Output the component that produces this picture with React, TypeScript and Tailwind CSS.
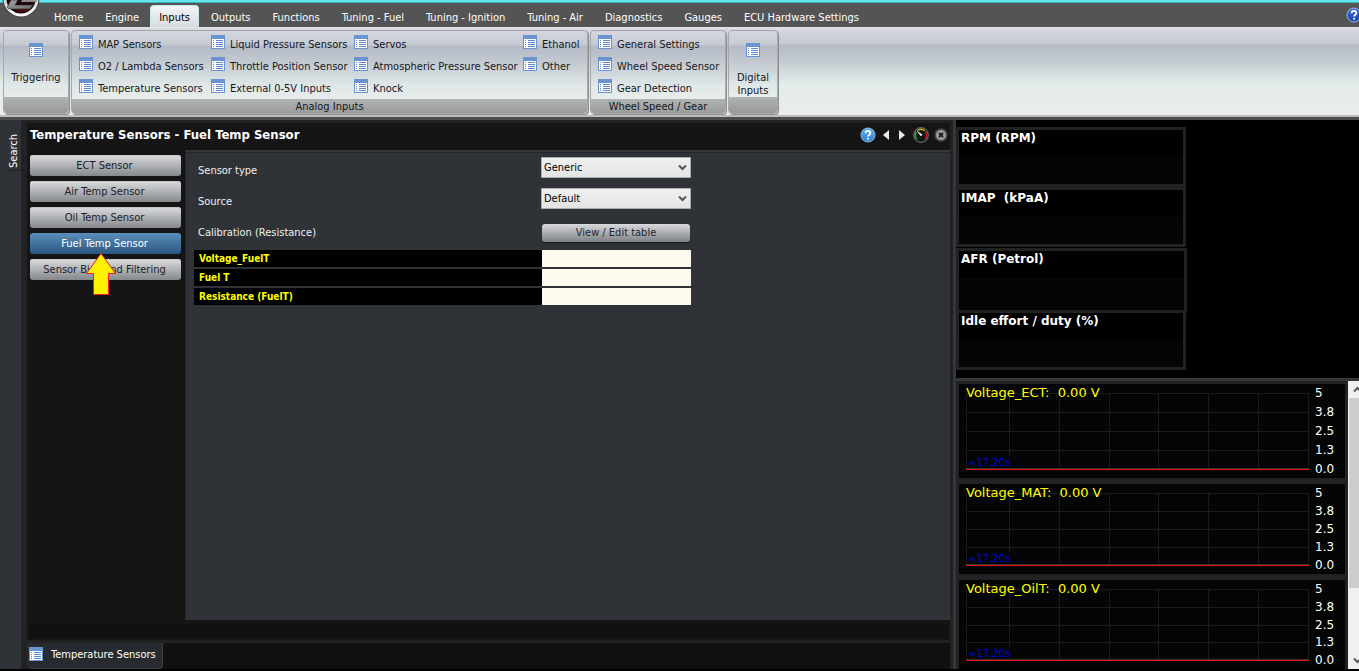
import React from "react";

const tabs = [
  "Home",
  "Engine",
  "Inputs",
  "Outputs",
  "Functions",
  "Tuning - Fuel",
  "Tuning - Ignition",
  "Tuning - Air",
  "Diagnostics",
  "Gauges",
  "ECU Hardware Settings",
];

const analogColumns: { items: string[]; width: string }[] = [
  { items: ["MAP Sensors", "O2 / Lambda Sensors", "Temperature Sensors"], width: "w-[132px]" },
  { items: ["Liquid Pressure Sensors", "Throttle Position Sensor", "External 0-5V Inputs"], width: "w-[143px]" },
  { items: ["Servos", "Atmospheric Pressure Sensor", "Knock"], width: "w-[169px]" },
  { items: ["Ethanol", "Other"], width: "w-[64px]" },
];

const wheelItems = ["General Settings", "Wheel Speed Sensor", "Gear Detection"];

const pages = [
  "ECT Sensor",
  "Air Temp Sensor",
  "Oil Temp Sensor",
  "Fuel Temp Sensor",
  "Sensor Bias and Filtering",
];

const readings = ["Voltage_FuelT", "Fuel T", "Resistance (FuelT)"];

const charts = [
  { title: "Voltage_ECT:  0.00 V", height: 76, box: "h-[85px]" },
  { title: "Voltage_MAT:  0.00 V", height: 72, box: "h-[81px]" },
  { title: "Voltage_OilT:  0.00 V", height: 71, box: "h-[81px]" },
];

const scale = ["5", "3.8", "2.5", "1.3", "0.0"];

function ListIcon() {
  return (
    <svg width="14" height="14" viewBox="0 0 14 14" shapeRendering="crispEdges" className="shrink-0" aria-hidden="true">
      <rect width="14" height="14" rx="1" fill="#6a94cf" />
      <rect x="1" y="4" width="12" height="9" fill="#fff" />
      {[5, 7, 9, 11].map((y) => (
        <g key={y} fill="#5f8ac8">
          <rect x="2" y={y} width="1" height="1" />
          <rect x="5" y={y} width="7" height="1" />
        </g>
      ))}
    </svg>
  );
}

function Logo() {
  return (
    <svg width="40" height="18" viewBox="0 0 40 18" className="absolute left-0 top-0" aria-hidden="true">
      <defs>
        <linearGradient id="ring" x1="0" y1="0" x2="0" y2="1">
          <stop offset="0" stopColor="#9b9b9b" />
          <stop offset="1" stopColor="#ffffff" />
        </linearGradient>
        <linearGradient id="mark" x1="0" y1="0" x2="1" y2="1">
          <stop offset="0" stopColor="#a5a5a5" />
          <stop offset="1" stopColor="#6c6c6c" />
        </linearGradient>
      </defs>
      <circle cx="21" cy="-1" r="18.5" fill="#3d3d3d" />
      <circle cx="21" cy="-1" r="17.5" fill="url(#ring)" />
      <circle cx="21" cy="-1" r="14.5" fill="#1c0608" />
      <path d="M13 9 Q20 15 30 9 Z" fill="#4a0a10" />
      <path d="M11 0 H18 L15 5 H33 L30 9 H9 L7 7.5 Z" fill="url(#mark)" stroke="#262626" strokeWidth="0.6" />
      <path d="M22 0 H37 L36 2 H21 Z" fill="#8d8d8d" />
    </svg>
  );
}

function HelpIcon({ id, light, dark }: { id: string; light: string; dark: string }) {
  return (
    <svg width="16" height="16" viewBox="0 0 16 16" aria-hidden="true">
      <defs>
        <linearGradient id={id} x1="0" y1="0" x2="0" y2="1">
          <stop offset="0" stopColor={light} />
          <stop offset="1" stopColor={dark} />
        </linearGradient>
      </defs>
      <circle cx="8" cy="8" r="7" fill={`url(#${id})`} stroke="#8dbdea" strokeWidth="1" />
      <path d="M5.6 6.2 C5.6 3.2 10.5 3.3 10.4 6 C10.4 7.7 8.1 7.8 8.1 9.6" fill="none" stroke="#fff" strokeWidth="1.7" />
      <rect x="7.2" y="10.8" width="1.8" height="1.8" fill="#fff" />
    </svg>
  );
}

function GaugeIcon() {
  return (
    <svg width="16" height="16" viewBox="0 0 16 16" aria-hidden="true">
      <circle cx="8" cy="8" r="7.3" fill="#151515" stroke="#666" strokeWidth="1.3" />
      <path d="M4 12 A5.6 5.6 0 0 1 3.4 4.8" fill="none" stroke="#18b035" strokeWidth="1.5" />
      <path d="M4.4 3.7 A5.6 5.6 0 0 1 11.6 3.7" fill="none" stroke="#c9b813" strokeWidth="1.5" />
      <path d="M12.4 4.6 A5.6 5.6 0 0 1 12 12" fill="none" stroke="#d01818" strokeWidth="1.5" />
      <path d="M4.5 4.5 L9 7.5 L8 9 Z" fill="#fff" stroke="#fff" strokeWidth="0.5" />
    </svg>
  );
}

function CloseIcon() {
  return (
    <svg width="16" height="16" viewBox="0 0 16 16" aria-hidden="true">
      <circle cx="8" cy="8" r="7" fill="#3a3a3a" />
      <circle cx="8" cy="8" r="5.2" fill="#9a9a9a" />
      <path d="M6 6 L10 10 M10 6 L6 10" stroke="#1c1c1c" strokeWidth="1.8" />
    </svg>
  );
}

function Chevron({ up = false }: { up?: boolean }) {
  return (
    <svg width="9" height="7" viewBox="0 0 9 7" aria-hidden="true">
      <path d={up ? "M1 5.5 L4.5 2 L8 5.5" : "M1 1.5 L4.5 5 L8 1.5"} fill="none" stroke="#555" strokeWidth="2" />
    </svg>
  );
}

const groupClass =
  "flex flex-col overflow-hidden rounded-[4px] border border-[#a5a8ad] bg-[linear-gradient(to_bottom,#d3d7de_0,#c5cad3_14px,#b3bac5_15px,#c3cad1_32px,#e0e8e8_55px,#e8ecec_68px)] shadow-[1px_1px_0_#909090]";

function GroupFooter({ children }: { children?: React.ReactNode }) {
  return (
    <div className="h-4 shrink-0 bg-gradient-to-b from-[#b0b3b2] to-[#989a99] text-center leading-4">{children}</div>
  );
}

function RibbonItem({ label }: { label: string }) {
  return (
    <button type="button" className="flex h-[22px] items-center gap-[5px] whitespace-nowrap">
      <span className="pb-1">
        <ListIcon />
      </span>
      <span className="pt-[2px]">{label}</span>
    </button>
  );
}

function Ribbon() {
  return (
    <div className="flex h-[90px] shrink-0 gap-[2px] border-b-2 border-[#bcbcbc] bg-[linear-gradient(to_bottom,#e4e5e8_0,#d5d7de_3px,#c5c8d2_17px,#b3bac5_18px,#c3cad1_34px,#e2ecea_56px,#ebecec_86px)] pt-[3px] pb-px pl-[3px]">
      <section className={groupClass + " w-[66px]"}>
        <button type="button" className="flex flex-1 flex-col items-center pt-3">
          <ListIcon />
          <span className="mt-[14px] leading-[13px]">Triggering</span>
        </button>
        <GroupFooter />
      </section>
      <section className={groupClass}>
        <div className="flex flex-1 pt-[2px] pl-[7px]">
          {analogColumns.map((c) => (
            <div key={c.items[0]} className={c.width}>
              {c.items.map((i) => (
                <RibbonItem key={i} label={i} />
              ))}
            </div>
          ))}
        </div>
        <GroupFooter>Analog Inputs</GroupFooter>
      </section>
      <section className={groupClass + " w-[136px]"}>
        <div className="flex-1 pt-[2px] pl-[7px]">
          {wheelItems.map((i) => (
            <RibbonItem key={i} label={i} />
          ))}
        </div>
        <GroupFooter>Wheel Speed / Gear</GroupFooter>
      </section>
      <section className={groupClass + " w-[50px]"}>
        <button type="button" className="flex flex-1 flex-col items-center pt-3">
          <ListIcon />
          <span className="mt-[14px] leading-[13px]">
            Digital
            <br />
            Inputs
          </span>
        </button>
        <GroupFooter />
      </section>
    </div>
  );
}

function SelectField({ id, label, value }: { id: string; label: string; value: string }) {
  return (
    <div className="flex h-[31px] items-center">
      <label htmlFor={id} className="w-[343px] pt-2">
        {label}
      </label>
      <div className="relative w-[150px]">
        <select
          id={id}
          defaultValue={value}
          className="block h-[21px] w-full appearance-none border border-[#acacac] bg-gradient-to-b from-[#f0f0f0] to-[#e4e4e4] pt-[2px] pl-[2px] text-black outline-none"
        >
          <option>{value}</option>
        </select>
        <span className="pointer-events-none absolute right-1 top-[7px]">
          <Chevron />
        </span>
      </div>
    </div>
  );
}

function EditorPanel() {
  return (
    <main className="flex min-w-0 flex-1 flex-col border-t-3 border-l-3 border-[#222] bg-[#101010]">
      <div className="flex min-h-0 flex-1 flex-col bg-[#151515]">
        <header className="flex h-[27px] shrink-0 items-center justify-between pb-[3px] pl-[3px]">
          <h1 className="text-[13px] font-bold text-white">Temperature Sensors - Fuel Temp Sensor</h1>
          <div className="flex items-center pr-px">
            <button type="button" aria-label="Help">
              <HelpIcon id="help-panel" light="#5fb0f0" dark="#2f7ed2" />
            </button>
            <button type="button" aria-label="Previous" className="ml-[7px]">
              <svg width="6" height="10" viewBox="0 0 6 10"><path d="M6 0 V10 L0 5 Z" fill="#e8e8e8" /></svg>
            </button>
            <button type="button" aria-label="Next" className="ml-[10px]">
              <svg width="6" height="10" viewBox="0 0 6 10"><path d="M0 0 V10 L6 5 Z" fill="#e8e8e8" /></svg>
            </button>
            <button type="button" aria-label="Gauges" className="ml-2">
              <GaugeIcon />
            </button>
            <button type="button" aria-label="Close" className="ml-1">
              <CloseIcon />
            </button>
          </div>
        </header>
        <div className="flex min-h-0 flex-1">
          <nav className="flex w-[158px] shrink-0 flex-col gap-[5px] pt-[5px] pr-1 pl-[3px]">
            {pages.map((p) =>
              p === "Fuel Temp Sensor" ? (
                <div key={p} className="relative">
                  <button
                    type="button"
                    className="block h-[21px] w-full rounded-[3px] bg-gradient-to-b from-[#5a8fbd] to-[#2c587f] pt-[2px] pr-[2px] text-white"
                  >
                    {p}
                  </button>
                  <svg
                    width="32"
                    height="44"
                    viewBox="0 0 32 44"
                    className="pointer-events-none absolute left-[55px] top-[19px] z-10"
                    aria-hidden="true"
                  >
                    <path d="M16 1.5 L30.5 21.5 H23.5 V42.5 H8.5 V21.5 H1.5 Z" fill="#fff200" stroke="#ed1c24" />
                  </svg>
                </div>
              ) : (
                <button
                  key={p}
                  type="button"
                  className="h-[21px] rounded-[3px] bg-gradient-to-b from-[#dcdddf] to-[#85888c] pt-[2px] pr-[2px] text-[#1c2026] shadow-[inset_0_1px_0_#c4c6c8]"
                >
                  {p}
                </button>
              ),
            )}
          </nav>
          <section className="min-w-0 flex-1 border-t-2 border-l border-[#33373c] border-l-[#22262b] bg-[#2f3338] text-[#f0f0f0] shadow-[inset_0_1px_0_#22262b]">
            <div className="pl-3">
              <SelectField id="sensor-type" label="Sensor type" value="Generic" />
              <SelectField id="source" label="Source" value="Default" />
              <div className="mt-[3px] flex h-[31px] items-center">
                <span className="w-[344px] pt-[2px]">Calibration (Resistance)</span>
                <button
                  type="button"
                  className="h-[18px] w-[148px] rounded-[3px] bg-gradient-to-b from-[#d8d9dc] to-[#7e8286] pt-px text-[#23272d] shadow-[0_1px_1px_#17191c]"
                >
                  View / Edit table
                </button>
              </div>
            </div>
            <table className="ml-2 w-[497px] table-fixed border-separate [border-spacing:0_2px]">
              <tbody>
                {readings.map((r) => (
                  <tr key={r}>
                    <th scope="row" className="h-[17px] w-[348px] bg-black py-0 pl-[5px] text-left font-['DejaVu_Sans_Condensed',Tahoma,sans-serif] text-[10px] leading-[17px] font-bold text-[#ff0]">
                      {r}
                    </th>
                    <td className="bg-[#fffaf0] p-0" />
                  </tr>
                ))}
              </tbody>
            </table>
          </section>
        </div>
        <div className="mt-[5px] mr-[2px] mb-[2px] ml-[2px] h-[13px] shrink-0 bg-[#101010]" />
      </div>
      <footer className="h-[29px] shrink-0 border-t-3 border-[#222]">
        <button
          type="button"
          className="flex h-[26px] w-[136px] items-center gap-2 rounded-b-[4px] border-r border-b border-[#3c4045] bg-[#272b30] pl-[2px] text-white"
        >
          <span className="pb-[3px]">
            <ListIcon />
          </span>
          Temperature Sensors
        </button>
      </footer>
    </main>
  );
}

function Readout({ title, className }: { title: string; className: string }) {
  return (
    <div
      className={
        "border-3 border-[#222] bg-[linear-gradient(to_bottom,#000_27px,#050505_27px)] pl-[2px] text-[12px] leading-4 font-bold whitespace-pre text-white " +
        className
      }
    >
      {title}
    </div>
  );
}

function Chart({ title, height, box }: { title: string; height: number; box: string }) {
  const rows = [0, 1, 2, 3].map((i) => Math.round((height * i) / 4) + 0.5);
  const columns = [0, 43, 93, 143, 193, 243, 293, 343].map((x) => x + 0.5);
  return (
    <div className={"relative box-content flex shrink-0 border-3 border-[#222] bg-[#050505] pt-[9px] pl-[7px] text-[13px] " + box}>
      <svg
        width="344"
        height={height + 1}
        viewBox={`0 0 344 ${height + 1}`}
        preserveAspectRatio="none"
        className="h-fit min-w-0 flex-1"
        shapeRendering="crispEdges"
        aria-hidden="true"
      >
        {columns.map((x) => (
          <line key={x} x1={x} x2={x} y1="0" y2={x === 43.5 ? height - 13 : height} stroke="#1b1b1b" />
        ))}
        {rows.map((y) => (
          <line key={y} x1="0" x2="344" y1={y} y2={y} stroke="#1b1b1b" />
        ))}
        <rect x="0" y={height - 1} width="344" height="1" fill="#333" />
        <rect x="0" y={height} width="344" height="1" fill="#f01410" />
      </svg>
      <div
        className="flex w-[36px] flex-col justify-between pl-[6px] text-[12px] leading-[12px] text-white"
        style={{ height: height + 12, marginTop: -6 }}
      >
        {scale.map((s) => (
          <span key={s}>{s}</span>
        ))}
      </div>
      <span className="absolute top-0 left-[7px] leading-[18px] whitespace-pre text-[#ff0]">{title}</span>
      <span className="absolute left-[9px] text-[10px] leading-3 text-[#0000e0]" style={{ top: height - 3 }}>
        ≈17.20s
      </span>
    </div>
  );
}

function Monitor() {
  return (
    <aside className="flex w-[409px] shrink-0 flex-col overflow-hidden border-l-3 border-[#222] font-['DejaVu_Sans',Verdana,sans-serif]">
      <div className="flex min-h-0 flex-1 flex-col border-l-3 border-[#33373c]">
        <div className="h-[258px] shrink-0 bg-black pt-[7px]">
          <Readout title="RPM (RPM)" className="h-[60px] w-[230px]" />
          <Readout title="IMAP  (kPaA)" className="h-[60px] w-[230px]" />
          <Readout title="AFR (Petrol)" className="mt-px h-[65px] w-[231px]" />
          <Readout title="Idle effort / duty (%)" className="h-[57px] w-[230px] border-t-0" />
        </div>
        <div className="flex min-h-0 flex-1 border-t-3 border-[#33373c]">
          <div className="flex w-[392px] shrink-0 flex-col overflow-hidden bg-[#222]">
            {charts.map((c) => (
              <Chart key={c.title} {...c} />
            ))}
          </div>
          <div className="flex w-[17px] shrink-0 flex-col items-center justify-between bg-[#f0f0f0] pl-px">
            <button type="button" aria-label="Scroll up" className="flex h-[17px] shrink-0 items-center">
              <Chevron up />
            </button>
            <div className="mb-auto h-[190px] w-full bg-[#cdcdcd]" />
            <button type="button" aria-label="Scroll down" className="flex h-[17px] items-center">
              <Chevron />
            </button>
          </div>
        </div>
      </div>
    </aside>
  );
}

export default function App() {
  return (
    <div className="flex h-screen flex-col overflow-hidden border-b-2 border-black bg-[#222] font-['DejaVu_Sans_Condensed',Tahoma,'DejaVu_Sans',sans-serif] text-[11px] text-[#15171c]">
      <div className="relative shrink-0">
        <div className="h-[3px] border-b border-[#3fb4b9] bg-[#62e5ef]" />
        <nav className="flex h-6 items-end bg-[#545454] pl-[43px]">
          {tabs.map((t) => (
            <a
              key={t}
              href={"#" + t.toLowerCase().replace(/[^a-z]+/g, "-")}
              className={
                t === "Inputs"
                  ? "mr-px h-[22px] rounded-t-[4px] border border-b-0 border-[#bfeef2] bg-gradient-to-b from-[#f4f5f6] to-[#d8dbe2] px-2 pt-1 leading-4 text-black"
                  : "h-[22px] px-[11px] pt-[5px] leading-4 text-white"
              }
            >
              {t}
            </a>
          ))}
          <button type="button" aria-label="Help" className="mr-[-3px] mb-1 ml-auto">
            <HelpIcon id="help-window" light="#3f6fe0" dark="#1a3fae" />
          </button>
        </nav>
        <Logo />
      </div>
      <Ribbon />
      <div className="h-[3px] shrink-0 bg-[#4d4d4d]" />
      <div className="flex min-h-0 flex-1">
        <div className="w-6 shrink-0 border-r-3 border-[#202225] bg-[#2f3338]">
          <button
            type="button"
            className="ml-[6px] h-[51px] border-b border-[#202225] pb-px text-[11px] leading-4 text-white"
          >
            <span className="block rotate-180 pb-3 [writing-mode:vertical-rl]">Search</span>
          </button>
        </div>
        <EditorPanel />
        <Monitor />
      </div>
    </div>
  );
}
